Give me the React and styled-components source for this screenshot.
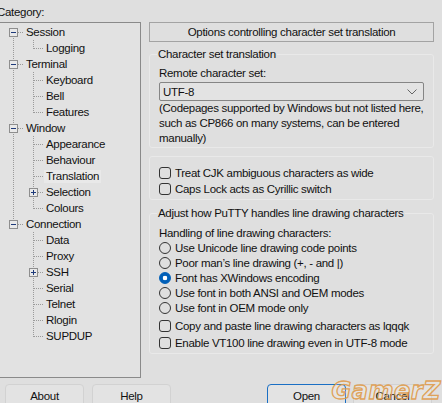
import styled, {createGlobalStyle} from 'styled-components'

const GlobalStyle = createGlobalStyle`
  html, body {
    margin: 0;
    padding: 0;
    background: #dfdfdf;
    overflow: hidden;
  }
  body {
    font-family: 'Liberation Sans', Arial, sans-serif;
    font-size: 11.5px;
    letter-spacing: -0.3px;
    color: #111;
  }
`

const tree = [
  {label: 'Session', cells: [{v: 'bottom', h: true, box: '-'}]},
  {label: 'Logging', cells: [{v: 'full'}, {v: 'top', h: true}]},
  {label: 'Terminal', cells: [{v: 'full', h: true, box: '-'}]},
  {label: 'Keyboard', cells: [{v: 'full'}, {v: 'full', h: true}]},
  {label: 'Bell', cells: [{v: 'full'}, {v: 'full', h: true}]},
  {label: 'Features', cells: [{v: 'full'}, {v: 'top', h: true}]},
  {label: 'Window', cells: [{v: 'full', h: true, box: '-'}]},
  {label: 'Appearance', cells: [{v: 'full'}, {v: 'full', h: true}]},
  {label: 'Behaviour', cells: [{v: 'full'}, {v: 'full', h: true}]},
  {label: 'Translation', cells: [{v: 'full'}, {v: 'full', h: true}], selected: true},
  {label: 'Selection', cells: [{v: 'full'}, {v: 'full', h: true, box: '+'}]},
  {label: 'Colours', cells: [{v: 'full'}, {v: 'top', h: true}]},
  {label: 'Connection', cells: [{v: 'top', h: true, box: '-'}]},
  {label: 'Data', cells: [{v: 'none'}, {v: 'full', h: true}]},
  {label: 'Proxy', cells: [{v: 'none'}, {v: 'full', h: true}]},
  {label: 'SSH', cells: [{v: 'none'}, {v: 'full', h: true, box: '+'}]},
  {label: 'Serial', cells: [{v: 'none'}, {v: 'full', h: true}]},
  {label: 'Telnet', cells: [{v: 'none'}, {v: 'full', h: true}]},
  {label: 'Rlogin', cells: [{v: 'none'}, {v: 'full', h: true}]},
  {label: 'SUPDUP', cells: [{v: 'none'}, {v: 'top', h: true}]},
]

const radios = [
  {label: 'Use Unicode line drawing code points'},
  {label: 'Poor man\u2019s line drawing (+, - and |)'},
  {label: 'Font has XWindows encoding', checked: true},
  {label: 'Use font in both ANSI and OEM modes'},
  {label: 'Use font in OEM mode only'},
]

const Connector = ({v, h, box}) => {
  const dot = {stroke: '#9a9a9a', strokeWidth: 1, strokeDasharray: '1 1'}
  return (
    <svg width="20" height="16" viewBox="0 0 20 16" shapeRendering="crispEdges">
      {(v === 'full' || v === 'top') && (
        <line x1="10.5" y1="0" x2="10.5" y2={v === 'full' ? 16 : 9} {...dot} />
      )}
      {v === 'bottom' && <line x1="10.5" y1="8" x2="10.5" y2="16" {...dot} />}
      {h && <line x1="11" y1="8.5" x2="20" y2="8.5" {...dot} />}
      {box && (
        <g>
          <rect x="6.5" y="4.5" width="8" height="8" fill="#e9e9e9" stroke="#8e8e8e" />
          <line x1="8" y1="8.5" x2="13" y2="8.5" stroke="#1e3a7a" />
          {box === '+' && <line x1="10.5" y1="6" x2="10.5" y2="11" stroke="#1e3a7a" />}
        </g>
      )}
    </svg>
  )
}

const Chevron = () => (
  <svg width="10" height="6" viewBox="0 0 10 6">
    <polyline points="0.5,0.5 5,5 9.5,0.5" fill="none" stroke="#666" strokeWidth="1" />
  </svg>
)

export default function App() {
  return (
    <Window>
      <GlobalStyle />
      <Top>
        <LeftCol>
          <CategoryLabel>Category:</CategoryLabel>
          <TreeBox>
            {tree.map(item => (
              <TreeRow key={item.label}>
                {item.cells.map((c, i) => (
                  <Connector key={i} v={c.v} h={c.h} box={c.box} />
                ))}
                <TreeLabel $selected={item.selected}>{item.label}</TreeLabel>
              </TreeRow>
            ))}
          </TreeBox>
        </LeftCol>
        <RightPanel>
          <Header>Options controlling character set translation</Header>
          <Group $mt={5} $pb={1}>
            <Legend>Character set translation</Legend>
            <FieldLabel>Remote character set:</FieldLabel>
            <Select>
              <span>UTF-8</span>
              <Chevron />
            </Select>
            <Note>
              (Codepages supported by Windows but not listed here,
              <br />
              such as CP866 on many systems, can be entered
              <br />
              manually)
            </Note>
          </Group>
          <Group $mt={8} $pt={8} $pb={2}>
            <Option $h={16}>
              <CheckBox />
              Treat CJK ambiguous characters as wide
            </Option>
            <Option $h={16}>
              <CheckBox />
              Caps Lock acts as Cyrillic switch
            </Option>
          </Group>
          <Group $mt={6} $pb={2}>
            <Legend>Adjust how PuTTY handles line drawing characters</Legend>
            <SubLabel>Handling of line drawing characters:</SubLabel>
            {radios.map(r => (
              <Option key={r.label} $h={15}>
                <Radio $checked={r.checked} />
                {r.label}
              </Option>
            ))}
            <Option $h={17} $mt={2}>
              <CheckBox />
              Copy and paste line drawing characters as lqqqk
            </Option>
            <Option $h={17}>
              <CheckBox />
              Enable VT100 line drawing even in UTF-8 mode
            </Option>
          </Group>
        </RightPanel>
      </Top>
      <ButtonBar>
        <ButtonGroup $gap={8}>
          <Button>About</Button>
          <Button>Help</Button>
        </ButtonGroup>
        <ButtonGroup $gap={7}>
          <Button $primary>Open</Button>
          <Button>Cancel</Button>
        </ButtonGroup>
      </ButtonBar>
      <Watermark>GamerZ</Watermark>
    </Window>
  )
}

const Window = styled.div`
  position: relative;
  width: 442px;
  height: 403px;
  overflow: hidden;
  display: flex;
  flex-direction: column;
`

const Top = styled.div`
  display: flex;
  gap: 8px;
  margin-left: -3px;
`

const LeftCol = styled.div`
  width: 144px;
  display: flex;
  flex-direction: column;
`

const CategoryLabel = styled.div`
  line-height: 15px;
  padding-top: 5px;
`

const TreeBox = styled.div`
  margin-top: 2px;
  height: 356px;
  box-sizing: border-box;
  border: 1px solid #8a8a8a;
  background: #e2e2e2;
  padding: 1px 0 0 5px;
`

const TreeRow = styled.div`
  display: flex;
  align-items: center;
  height: 16px;
`

const TreeLabel = styled.span`
  line-height: 13px;
  padding: 0 2px;
  margin-left: 1px;
  white-space: nowrap;
  background: ${p => (p.$selected ? '#e9e9e9' : 'transparent')};
`

const RightPanel = styled.div`
  width: 285px;
  display: flex;
  flex-direction: column;
  padding-top: 22px;
`

const Header = styled.div`
  height: 20px;
  box-sizing: border-box;
  border: 1px solid #a3a3a3;
  text-align: center;
  line-height: 18px;
`

const Group = styled.fieldset`
  margin: ${p => p.$mt || 0}px 0 0 0;
  padding: ${p => p.$pt || 0}px 9px ${p => p.$pb || 0}px 9px;
  border: 1px solid #e9e9e9;
  border-radius: 3px;
  min-width: 0;
`

const Legend = styled.legend`
  padding: 0 1px;
  margin-left: -2px;
  line-height: 15px;
`

const FieldLabel = styled.div`
  margin-top: 4px;
  line-height: 15px;
`

const SubLabel = styled.div`
  margin-top: 6px;
  line-height: 13px;
`

const Select = styled.div`
  margin-top: 1px;
  height: 19px;
  box-sizing: border-box;
  border: 1px solid #858585;
  border-radius: 2px;
  background: #e3e3e3;
  display: flex;
  align-items: center;
  justify-content: space-between;
  padding: 0 6px 0 3px;
`

const Note = styled.div`
  line-height: 15px;
  white-space: nowrap;
`

const Option = styled.div`
  display: flex;
  align-items: center;
  height: ${p => p.$h}px;
  margin-top: ${p => p.$mt || 0}px;
  white-space: nowrap;
`

const CheckBox = styled.span`
  width: 12px;
  height: 12px;
  box-sizing: border-box;
  border: 1px solid #333;
  border-radius: 3px;
  margin-right: 4px;
  flex-shrink: 0;
`

const Radio = styled.span`
  width: 12px;
  height: 12px;
  box-sizing: border-box;
  border-radius: 50%;
  margin-right: 4px;
  flex-shrink: 0;
  border: 1px solid ${p => (p.$checked ? '#005fb8' : '#333')};
  background: ${p =>
    p.$checked ? 'radial-gradient(circle, #fff 0 2px, #005fb8 2.6px)' : 'transparent'};
`

const ButtonBar = styled.div`
  display: flex;
  justify-content: space-between;
  padding: 6px 10px 0 5px;
`

const ButtonGroup = styled.div`
  display: flex;
  gap: ${p => p.$gap}px;
`

const Button = styled.div`
  width: 79px;
  height: 23px;
  box-sizing: border-box;
  border: 1px solid ${p => (p.$primary ? '#1a6fc4' : '#d2d2d2')};
  border-radius: 4px;
  background: #e3e3e3;
  display: flex;
  align-items: center;
  justify-content: center;
`

const Watermark = styled.div`
  position: absolute;
  right: 1px;
  bottom: -2px;
  font-family: 'DejaVu Sans', sans-serif;
  font-weight: bold;
  font-style: italic;
  font-size: 24px;
  letter-spacing: 0.5px;
  color: rgba(245, 235, 220, 0.2);
  -webkit-text-stroke: 1.3px rgba(223, 154, 72, 0.9);
`
